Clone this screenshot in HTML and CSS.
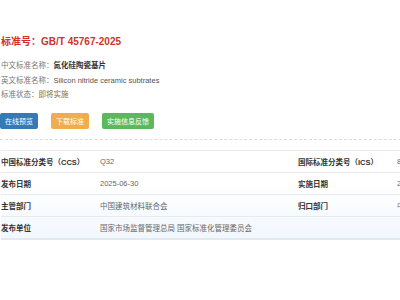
FILE: index.html
```html
<!DOCTYPE html>
<html lang="zh-CN">
<head>
    <meta charset="UTF-8">
    <title>GB/T 45767-2025</title>
    <link rel="stylesheet" href="styles.css">
</head>
<body>

<div class="page">
    <h1 class="std-title">标准号：GB/T 45767-2025</h1>

    <div class="info">
        <div class="info-row"><span class="info-label">中文标准名称：</span><b class="info-cn">氮化硅陶瓷基片</b></div>
        <div class="info-row"><span class="info-label">英文标准名称：</span><span class="info-en">Silicon nitride ceramic subtrates</span></div>
        <div class="info-row"><span class="info-label">标准状态：</span><span class="info-status">即将实施</span></div>
    </div>

    <div class="actions">
        <button class="btn btn-blue">在线预览</button>
        <button class="btn btn-orange">下载标准</button>
        <button class="btn btn-green">实施信息反馈</button>
    </div>

    <table class="detail">
        <tr>
            <th>中国标准分类号（CCS）</th>
            <td class="wide">Q32</td>
            <th>国际标准分类号（ICS）</th>
            <td>81.060.30</td>
        </tr>
        <tr>
            <th>发布日期</th>
            <td class="wide">2025-06-30</td>
            <th>实施日期</th>
            <td>2026-01-01</td>
        </tr>
        <tr>
            <th>主管部门</th>
            <td class="wide">中国建筑材料联合会</td>
            <th>归口部门</th>
            <td>中国建筑材料联合会</td>
        </tr>
        <tr>
            <th>发布单位</th>
            <td colspan="3">国家市场监督管理总局 国家标准化管理委员会</td>
        </tr>
    </table>
</div>

</body>
</html>
```

FILE: styles.css
```css
html, body {
    margin: 0;
    overflow: hidden;
    background: #fff;
}
body {
    font-family: 'Liberation Sans', 'Noto Sans CJK SC', sans-serif;
    color: #333;
}
.page {
    width: 640px;
    padding: 35px 0 0 1px;
}
.std-title {
    margin: 0;
    font-size: 10px;
    line-height: 14px;
    font-weight: bold;
    color: #d0332b;
}
.info {
    margin-top: 10px;
    font-size: 7.5px;
}
.info-row {
    line-height: 14.5px;
}
.info-label {
    color: #777;
}
.info-cn {
    color: #333;
}
.info-en {
    color: #555;
}
.info-status {
    color: #8a6d3b;
}
.actions {
    display: flex;
    gap: 13px;
    margin: 10.5px 0 0 -1px;
    padding-bottom: 10px;
    border-bottom: 1px dashed #ddd;
}
.btn {
    height: 16px;
    padding: 0 5px;
    border: none;
    border-radius: 2px;
    font-family: inherit;
    font-size: 7px;
    color: #fff;
}
.btn-blue {
    background: #337ab7;
}
.btn-orange {
    background: #f0ad4e;
}
.btn-green {
    background: #5cb85c;
}
.detail {
    margin-top: 10px;
    width: 600px;
    border-collapse: collapse;
    font-size: 7.5px;
    background: linear-gradient(#fff 40%, #f1f7fd);
    border-top: 1px solid #e8ebee;
    border-bottom: 2px solid #e3e9f0;
}
.detail tr {
    height: 22px;
    border-bottom: 1px solid #e8ebee;
}
.detail th, .detail td {
    padding: 0;
    text-align: left;
    vertical-align: middle;
}
.detail th {
    width: 99px;
    font-weight: bold;
    color: #333;
}
.detail th + td {
    color: #666;
}
.detail td.wide {
    width: 198px;
}
```
